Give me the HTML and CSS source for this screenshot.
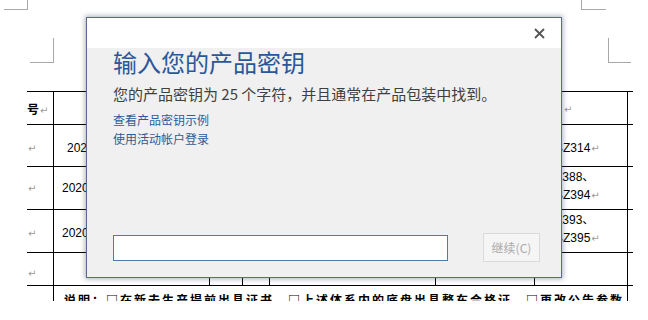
FILE: index.html
```html
<!DOCTYPE html>
<html lang="zh-CN">
<head>
  <meta charset="UTF-8">
  <meta name="viewport" content="width=device-width, initial-scale=1.0">
  <title>输入您的产品密钥</title>
  <link rel="stylesheet" href="styles.css">
</head>
<body>

  <div class="page">
    <!-- Page margin marks -->
    <div class="marks">
      <span class="mark mark-tl"></span>
      <span class="mark mark-tr"></span>
    </div>
    <div class="marks marks-inner">
      <span class="mark mark-il"></span>
      <span class="mark mark-ir"></span>
    </div>

    <!-- Document table -->
    <div class="sheet">
      <div class="row r1">
        <div class="cell c1"><b class="cjk">号</b><span class="pm">↵</span></div>
        <div class="cell c2"></div>
        <div class="cell c3"></div>
        <div class="cell c4"></div>
        <div class="cell c5"></div>
        <div class="cell c6"></div>
        <div class="cell c7 head"><span class="pm">↵</span></div>
        <div class="cell c8"></div>
      </div>
      <div class="row r2">
        <div class="cell c1"><span class="pm">↵</span></div>
        <div class="cell c2 shift">2020年</div>
        <div class="cell c3"></div>
        <div class="cell c4"></div>
        <div class="cell c5"></div>
        <div class="cell c6"></div>
        <div class="cell c7 code">BZ314<span class="pm">↵</span></div>
        <div class="cell c8"></div>
      </div>
      <div class="row r3">
        <div class="cell c1"><span class="pm">↵</span></div>
        <div class="cell c2">2020年</div>
        <div class="cell c3"></div>
        <div class="cell c4"></div>
        <div class="cell c5"></div>
        <div class="cell c6"></div>
        <div class="cell c7 code two">Z388、<br>BZ394<span class="pm">↵</span></div>
        <div class="cell c8"></div>
      </div>
      <div class="row r4">
        <div class="cell c1"><span class="pm">↵</span></div>
        <div class="cell c2">2020年</div>
        <div class="cell c3"></div>
        <div class="cell c4"></div>
        <div class="cell c5"></div>
        <div class="cell c6"></div>
        <div class="cell c7 code two">Z393、<br>BZ395<span class="pm">↵</span></div>
        <div class="cell c8"></div>
      </div>
      <div class="row r5">
        <div class="cell c1"><span class="pm">↵</span></div>
        <div class="cell c2"></div>
        <div class="cell c3"></div>
        <div class="cell c4"></div>
        <div class="cell c5"></div>
        <div class="cell c6"></div>
        <div class="cell c7"></div>
        <div class="cell c8"></div>
      </div>
      <div class="row r6">
        <div class="cell c1"></div>
        <div class="cell wide">说明：□在新去生产提前出具证书　□上述体系内的底盘出具整车合格证　□更改公告参数</div>
        <div class="cell c8"></div>
      </div>
    </div>

    <!-- Product key dialog -->
    <div class="dialog">
      <div class="dialog-head">
        <svg class="close" width="11" height="11" viewBox="0 0 11 11">
          <path d="M1 1 L10 10 M10 1 L1 10" stroke="#555" stroke-width="1.8" fill="none"/>
        </svg>
      </div>
      <div class="dialog-body">
        <h1 class="title">输入您的产品密钥</h1>
        <p class="desc">您的产品密钥为 25 个字符，并且通常在产品包装中找到。</p>
        <a class="link" href="#">查看产品密钥示例</a>
        <a class="link" href="#">使用活动帐户登录</a>
        <div class="actions">
          <input type="text" class="key-input">
          <button class="next" disabled>继续(C)</button>
        </div>
      </div>
    </div>
  </div>

</body>
</html>
```

FILE: styles.css
```css
* {
  box-sizing: border-box;
}
body, html {
  margin: 0;
  padding: 0;
  width: 100%;
  height: 100%;
  background-color: #fff;
  overflow: hidden;
  font-family: "Liberation Sans", "Noto Sans CJK SC", sans-serif;
}
.page {
  position: relative;
  width: 648px;
  height: 320px;
}

/* margin marks */
.marks {
  display: flex;
  justify-content: space-between;
}
.mark {
  display: block;
  border-bottom: 1px solid #a8a8a8;
}
.mark-tl {
  margin-left: 4px;
  width: 24px;
  height: 10px;
  border-right: 1px solid #a8a8a8;
}
.mark-tr {
  margin-right: 42px;
  width: 25px;
  height: 10px;
  border-left: 1px solid #a8a8a8;
}
.marks-inner {
  margin-top: 28px;
}
.mark-il {
  margin-left: 30px;
  width: 24px;
  height: 25px;
  border-right: 1px solid #a8a8a8;
}
.mark-ir {
  margin-right: 17px;
  width: 23px;
  height: 25px;
  border-left: 1px solid #a8a8a8;
}

/* table */
.sheet {
  margin-top: 28px;
  margin-left: 27px;
  width: 606px;
  height: 210px;
  overflow: hidden;
  border-top: 1px solid #000;
  font-size: 12px;
  color: #000;
}
.row {
  display: flex;
  border-bottom: 1px solid #000;
}
.r1 { height: 33px; }
.r2 { height: 42px; }
.r3 { height: 43px; }
.r4 { height: 43px; }
.r5 { height: 33px; }
.r6 { height: 60px; border-bottom: none; }
.cell {
  flex: none;
  border-right: 1px solid #000;
  line-height: 18px;
  white-space: nowrap;
  overflow: hidden;
}
.c1 { width: 27px; }
.c2 { width: 156px; padding-left: 8px; }
.c3 { width: 33px; }
.c4 { width: 27px; }
.c5 { width: 166px; }
.c6 { width: 99px; }
.c7 { width: 93px; padding-left: 20px; }
.c8 { width: 5px; border-right: none; }
.wide { width: 574px; }
.c2.shift { padding-left: 13px; }
.c7.head { padding-left: 28px; }
.r1 .cell { padding-top: 8px; }
.r2 .cell { padding-top: 14px; }
.r3 .cell { padding-top: 12px; }
.r4 .cell { padding-top: 14px; }
.r5 .cell { padding-top: 11px; }
.r6 .cell { padding-top: 7px; }
.r3 .two, .r4 .two { padding-top: 1px; }
.cjk {
  font-family: "Noto Sans CJK SC", sans-serif;
}
.pm {
  font-family: "DejaVu Sans", sans-serif;
  font-size: 10px;
  color: #9a9a9a;
  margin-left: 1px;
}
.wide {
  padding-left: 10px;
  font-family: "Noto Sans CJK SC", sans-serif;
  font-weight: bold;
  font-size: 12px;
  letter-spacing: 2px;
  line-height: 14px;
}

/* dialog */
.dialog {
  position: absolute;
  left: 86px;
  top: 17px;
  width: 476px;
  height: 261px;
  display: flex;
  flex-direction: column;
  border: 1px solid #5a6a8c;
  box-shadow: 0 0 5px 1px rgba(70, 80, 110, 0.45);
  font-family: "Noto Sans CJK SC", sans-serif;
}
.dialog-head {
  height: 30px;
  background-color: #fff;
  display: flex;
  align-items: center;
  justify-content: flex-end;
  padding-right: 16px;
}
.close {
  display: block;
}
.dialog-body {
  flex: 1;
  display: flex;
  flex-direction: column;
  align-items: flex-start;
  background-color: #f0f0f0;
  padding: 2px 21px 15px 26px;
}
.title {
  margin: 0;
  font-size: 24px;
  line-height: 24px;
  font-weight: normal;
  color: #2b579a;
}
.desc {
  margin: 10px 0 0;
  font-size: 15px;
  line-height: 20px;
  color: #404040;
}
.link {
  margin-top: 0;
  font-size: 12px;
  line-height: 19px;
  color: #2e5b98;
  text-decoration: none;
}
.desc + .link {
  margin-top: 6px;
}
.actions {
  margin-top: auto;
  width: 100%;
  display: flex;
  align-items: center;
  justify-content: space-between;
}
.key-input {
  width: 335px;
  height: 26px;
  margin: 0;
  padding: 0 4px;
  border: 1px solid #5577ad;
  background: #fff;
  outline: none;
}
.next {
  width: 57px;
  height: 29px;
  margin: 0;
  padding: 0;
  border: 1px solid #dadada;
  background-color: #f5f5f5;
  color: #ababab;
  font-family: "Noto Sans CJK SC", sans-serif;
  font-size: 12px;
}
```
